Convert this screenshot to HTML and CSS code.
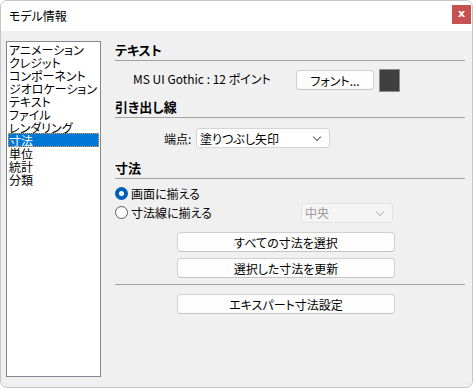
FILE: index.html
```html
<!DOCTYPE html>
<html lang="ja">
<head>
    <meta charset="UTF-8">
    <title>モデル情報</title>
    <link rel="stylesheet" href="styles.css">
</head>
<body>
    <div class="window">
        <div class="titlebar">
            <span class="title">モデル情報</span>
            <span class="close">x</span>
        </div>

        <div class="content">
            <!-- 左のカテゴリ一覧 -->
            <div class="list">
                <div class="item">アニメーション</div>
                <div class="item">クレジット</div>
                <div class="item">コンポーネント</div>
                <div class="item">ジオロケーション</div>
                <div class="item">テキスト</div>
                <div class="item">ファイル</div>
                <div class="item">レンダリング</div>
                <div class="item selected">寸法</div>
                <div class="item">単位</div>
                <div class="item">統計</div>
                <div class="item">分類</div>
            </div>

            <!-- 右の設定パネル -->
            <div class="panel">
                <div class="heading">テキスト</div>
                <div class="font-row">
                    <span class="font-label">MS UI Gothic : 12 ポイント</span>
                    <span class="btn font-btn">フォント...</span>
                    <span class="swatch"></span>
                </div>

                <div class="heading h2">引き出し線</div>
                <div class="end-row">
                    <span class="end-label">端点:</span>
                    <span class="select end-select">塗りつぶし矢印<span class="chev"></span></span>
                </div>

                <div class="heading h3">寸法</div>
                <div class="radio-row">
                    <span class="radio checked"></span>
                    <span>画面に揃える</span>
                </div>
                <div class="radio-row second">
                    <span class="radio"></span>
                    <span>寸法線に揃える</span>
                    <span class="select align-select disabled">中央<span class="chev"></span></span>
                </div>

                <div class="buttons">
                    <span class="btn wide">すべての寸法を選択</span>
                    <span class="btn wide">選択した寸法を更新</span>
                </div>
                <div class="sep"></div>
                <div class="buttons last">
                    <span class="btn wide">エキスパート寸法設定</span>
                </div>
            </div>
        </div>
    </div>
</body>
</html>
```

FILE: styles.css
```css
/* 全体 */
body {
    margin: 0;
    background-color: #ffffff;
    font-family: "Noto Sans CJK JP", "Noto Sans", sans-serif;
    font-size: 12px;
    color: #000000;
    font-feature-settings: "palt";
}

.window {
    width: 473px;
    height: 388px;
    box-sizing: border-box;
    border: 1px solid #c6c6c6;
    border-radius: 7px;
    overflow: hidden;
    background-color: #f0f0f0;
    display: flex;
    flex-direction: column;
}

/* タイトルバー */
.titlebar {
    height: 30px;
    background-color: #ffffff;
    display: flex;
    align-items: center;
    justify-content: space-between;
    padding-left: 8px;
}

.title {
    font-size: 12px;
    margin-top: -1px;
}

.close {
    width: 19px;
    height: 19px;
    margin-right: 1px;
    margin-top: 4px;
    align-self: flex-start;
    background-color: #c75050;
    color: #ffffff;
    font-family: "DejaVu Sans", sans-serif;
    font-weight: bold;
    font-size: 11px;
    line-height: 17px;
    text-align: center;
}

/* 本体 */
.content {
    flex: 1;
    display: flex;
    padding: 10px 0 0 5px;
}

.list {
    width: 95px;
    height: 336px;
    box-sizing: border-box;
    border: 1px solid #828790;
    background-color: #ffffff;
    padding: 1px 1px 0 1px;
}

.item {
    height: 13px;
    line-height: 13px;
    padding-left: 1px;
    white-space: nowrap;
}

.item.selected {
    background-color: #0078d7;
    color: #ffffff;
    outline: 1px dotted #f29b2e;
    outline-offset: -1px;
    height: 14px;
    margin: -1px 0 -0px 0;
    line-height: 15px;
}

/* 右パネル */
.panel {
    width: 350px;
    margin-left: 14px;
}

.heading {
    height: 19px;
    line-height: 17px;
    font-size: 13px;
    font-weight: bold;
    border-bottom: 1px solid #a0a0a0;
}

.h2 {
    margin-top: 6px;
}

.h3 {
    margin-top: 11px;
}

.font-row {
    display: flex;
    align-items: flex-start;
    margin-top: 8px;
    height: 23px;
}

.font-label {
    margin-left: 18px;
    margin-top: 1px;
    width: 163px;
}

.btn {
    display: flex;
    align-items: center;
    justify-content: center;
    box-sizing: border-box;
    height: 20px;
    background-color: #fdfdfd;
    border: 1px solid #d0d0d0;
    border-bottom-color: #c4c4c4;
    border-radius: 4px;
}

.font-btn {
    width: 78px;
    margin-top: 1px;
}

.swatch {
    width: 21px;
    height: 23px;
    box-sizing: border-box;
    margin-left: 5px;
    background-color: #404040;
    border: 1px solid #8c8c8c;
}

.end-row {
    display: flex;
    align-items: center;
    margin-top: 10px;
}

.end-label {
    margin-left: 49px;
    width: 32px;
}

.select {
    position: relative;
    display: flex;
    align-items: center;
    box-sizing: border-box;
    height: 20px;
    padding-left: 3px;
    background-color: #ffffff;
    border: 1px solid #d4d4d4;
    border-radius: 3px;
}

.chev {
    position: absolute;
    right: 9px;
    top: 5px;
    width: 5px;
    height: 5px;
    border-right: 1px solid #606060;
    border-bottom: 1px solid #606060;
    transform: rotate(45deg);
}

.end-select {
    width: 134px;
}

.align-select {
    width: 92px;
    margin-left: auto;
    margin-right: 72px;
}

.select.disabled {
    background-color: #f5f5f5;
    border-color: #e2e2e2;
    color: #9a9a9a;
}

.select.disabled .chev {
    border-color: #b8b8b8;
}

.radio-row {
    display: flex;
    align-items: center;
    height: 13px;
    margin-top: 8px;
}

.radio-row.second {
    margin-top: 6px;
}

.radio {
    width: 13px;
    height: 13px;
    box-sizing: border-box;
    border: 1px solid #5a5a5a;
    border-radius: 50%;
    margin-right: 3px;
    background-color: #ffffff;
}

.radio.checked {
    border: 4px solid #005fb8;
}

.buttons {
    display: flex;
    flex-direction: column;
    gap: 6px;
    margin-top: 13px;
    padding-left: 62px;
}

.wide {
    width: 218px;
}

.sep {
    height: 1px;
    background-color: #a0a0a0;
    margin-top: 6px;
}

.buttons.last {
    margin-top: 9px;
}
```
